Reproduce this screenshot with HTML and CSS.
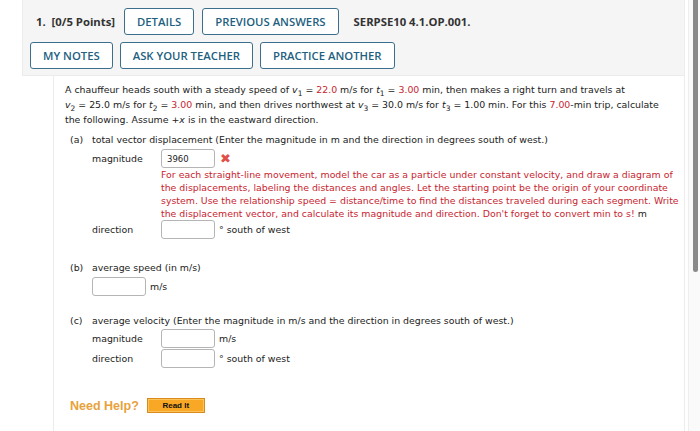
FILE: index.html
```html
<!DOCTYPE html>
<html>
<head>
<meta charset="utf-8">
<link rel="stylesheet" href="styles.css">
</head>
<body>
<div class="page">
  <div class="panel">
    <div class="row row1">
      <span class="qnum">1.&nbsp; [0/5 Points]</span>
      <span class="btn">DETAILS</span>
      <span class="btn">PREVIOUS ANSWERS</span>
      <span class="qid">SERPSE10 4.1.OP.001.</span>
    </div>
    <div class="row row2">
      <span class="btn">MY NOTES</span>
      <span class="btn">ASK YOUR TEACHER</span>
      <span class="btn">PRACTICE ANOTHER</span>
    </div>
  </div>
  <div class="content">
    <p class="stem">A chauffeur heads south with a steady speed of <i>v</i><sub>1</sub> = <span class="red">22.0</span> m/s for <i>t</i><sub>1</sub> = <span class="red">3.00</span> min, then makes a right turn and travels at<br><i>v</i><sub>2</sub> = 25.0 m/s for <i>t</i><sub>2</sub> = <span class="red">3.00</span> min, and then drives northwest at <i>v</i><sub>3</sub> = 30.0 m/s for <i>t</i><sub>3</sub> = 1.00 min. For this <span class="red">7.00</span>-min trip, calculate<br>the following. Assume +<i>x</i> is in the eastward direction.</p>

    <div class="part parta">
      <div class="plabel"><span class="pl">(a)</span><span>total vector displacement (Enter the magnitude in m and the direction in degrees south of west.)</span></div>
      <div class="field fa1">
        <span class="flabel">magnitude</span>
        <span class="box"><span class="val">3960</span></span>
        <span class="xmark">✖</span>
      </div>
      <div class="feedback">For each straight-line movement, model the car as a particle under constant velocity, and draw a diagram of<br>the displacements, labeling the distances and angles. Let the starting point be the origin of your coordinate<br>system. Use the relationship speed = distance/time to find the distances traveled during each segment. Write<br>the displacement vector, and calculate its magnitude and direction. Don't forget to convert min to s! <span class="dark">m</span></div>
      <div class="field fa2">
        <span class="flabel">direction</span>
        <span class="box"></span>
        <span class="unit">° south of west</span>
      </div>
    </div>

    <div class="part partb">
      <div class="plabel"><span class="pl">(b)</span><span>average speed (in m/s)</span></div>
      <div class="field fb">
        <span class="box"></span>
        <span class="unit">m/s</span>
      </div>
    </div>

    <div class="part partc">
      <div class="plabel"><span class="pl">(c)</span><span>average velocity (Enter the magnitude in m/s and the direction in degrees south of west.)</span></div>
      <div class="field fc1">
        <span class="flabel">magnitude</span>
        <span class="box"></span>
        <span class="unit">m/s</span>
      </div>
      <div class="field fc2">
        <span class="flabel">direction</span>
        <span class="box"></span>
        <span class="unit">° south of west</span>
      </div>
    </div>

    <div class="help">
      <span class="needhelp">Need Help?</span>
      <span class="readit">Read It</span>
    </div>
  </div>
</div>
<div class="scrollbar"><div class="thumb"></div></div>
</body>
</html>
```

FILE: styles.css
```css
html, body {
  margin: 0;
  padding: 0;
  background: #fff;
  width: 700px;
  height: 431px;
  overflow: hidden;
}
.page {
  width: 663px;
  margin-left: 22px;
}
.panel {
  background: #f5f5f5;
  border: 1px solid #ececec;
  border-top: none;
  height: 76px;
  box-sizing: border-box;
  padding: 8px 0 0 7px;
  font-family: "Open Sans", sans-serif;
}
.row {
  display: flex;
  align-items: center;
  gap: 7px;
}
.row1 { margin-bottom: 7px; }
.row1 .btn + .btn { margin-left: 1px; }
.qnum {
  font-weight: 700;
  font-size: 11.3px;
  color: #333;
  margin-left: 6px;
  margin-right: 2px;
}
.qid {
  font-weight: 700;
  font-size: 11.3px;
  color: #333;
  margin-left: 8px;
}
.btn {
  display: inline-flex;
  align-items: center;
  height: 27px;
  box-sizing: border-box;
  padding: 0 12px;
  border: 1.5px solid #3b6f8c;
  border-radius: 3px;
  background: #fff;
  color: #235f7f;
  font-weight: 600;
  font-size: 11.3px;
}
.content {
  margin-left: 31px;
  border-left: 1px solid #ececec;
  border-right: 1px solid #ececec;
  height: 360px;
  padding: 6px 0 0 11px;
  font-family: "DejaVu Sans", Verdana, sans-serif;
  font-size: 9.4px;
  color: #222;
  white-space: nowrap;
}
.stem {
  margin: 0;
  line-height: 15px;
}
sub {
  font-size: 7.5px;
  vertical-align: -3px;
  line-height: 0;
}
.red { color: #c8242f; }
.dark { color: #222; }
.part { margin-left: 5px; }
.parta { margin-top: 6px; }
.plabel {
  display: flex;
  line-height: 14px;
}
.pl { width: 22px; }
.field {
  display: flex;
  align-items: center;
  margin-left: 22px;
  height: 19px;
}
.fa1 { margin-top: 2px; }
.fa2 { margin-top: 0; }
.fb { margin-top: 2px; }
.fc1 { margin-top: 1px; }
.fc2 { margin-top: 1px; }
.flabel { width: 69px; }
.box {
  display: inline-flex;
  align-items: center;
  width: 54px;
  height: 19px;
  box-sizing: border-box;
  border: 1px solid #b5b5b5;
  border-radius: 3px;
  background: #fff;
  padding-left: 5px;
  font-size: 8.5px;
}
.unit { margin-left: 4px; }
.xmark {
  color: #e0504a;
  font-size: 13px;
  margin-left: 5px;
}
.feedback {
  margin-left: 91px;
  color: #c8242f;
  line-height: 13px;
}
.partb { margin-top: 22px; }
.partc { margin-top: 18px; }
.help {
  display: flex;
  align-items: center;
  margin-top: 30px;
  margin-left: 5px;
  height: 15px;
}
.needhelp {
  font-family: "Liberation Sans", Arial, sans-serif;
  font-weight: 700;
  font-size: 12.5px;
  color: #e8a23a;
}
.readit {
  display: inline-flex;
  align-items: center;
  justify-content: center;
  margin-left: 8px;
  width: 58px;
  height: 15px;
  box-sizing: border-box;
  background: #f9a825;
  border: 1px solid #d98a1a;
  box-shadow: inset 0 0 0 1px #fcc35a;
  font-family: "Liberation Sans", Arial, sans-serif;
  font-weight: 700;
  font-size: 8px;
  color: #111;
}
.scrollbar {
  position: absolute;
  top: 0;
  right: 0;
  width: 11px;
  height: 431px;
  background: #fafafa;
  border-left: 1px solid #eee;
}
.thumb {
  margin-left: 4px;
  width: 5px;
  height: 272px;
  background: #8a8a8a;
  border-radius: 0 0 3px 3px;
}
```
